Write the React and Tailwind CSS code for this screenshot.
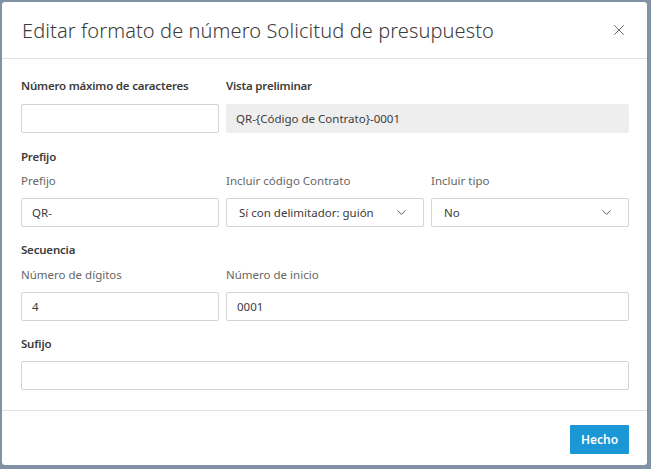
import { ChevronDown, X } from 'lucide-react';

const font = { fontFamily: '"Noto Sans", Roboto, sans-serif' };

function Field({ value = '', className = '' }) {
  return (
    <div className={`h-[29px] border border-[#d4d4d4] rounded-[2px] bg-white flex items-center px-[10px] text-[11.5px] text-[#3c3c3c] ${className}`}>
      {value}
    </div>
  );
}

function Select({ value }) {
  return (
    <div className="h-[29px] border border-[#d4d4d4] rounded-[2px] bg-white flex items-center justify-between pl-[12px] pr-[14px] text-[11.5px] text-[#3c3c3c]">
      <span>{value}</span>
      <ChevronDown className="w-[15px] h-[15px] text-[#555]" strokeWidth={1.5} />
    </div>
  );
}

function Label({ children, bold }) {
  return (
    <div className={`h-[16px] leading-[16px] text-[11.5px] ${bold ? 'font-semibold text-[#3c3c3c] tracking-[-0.2px]' : 'text-[#666]'}`}>
      {children}
    </div>
  );
}

export default function App() {
  return (
    <div className="w-[651px] h-[469px] bg-[#8292a6] pt-[2px] pl-[2px] pr-[4px] pb-[4px]" style={font}>
      <div className="bg-white rounded-[3px] h-full flex flex-col">
        {/* header */}
        <div className="h-[57px] shrink-0 border-b border-[#e3e3e3] flex items-center justify-between pl-[20px] pr-[19px]">
          <h1 className="text-[20px] font-light text-[#3c3c3c] tracking-[0.1px] mt-[2px]">
            Editar formato de número Solicitud de presupuesto
          </h1>
          <X className="w-[18px] h-[18px] text-[#666]" strokeWidth={1.3} />
        </div>

        {/* body */}
        <div className="flex-1 pl-[19px] pr-[18px] pt-[19px]">
          <div className="grid grid-cols-[198px_1fr] gap-x-[7px]">
            <Label bold>Número máximo de caracteres</Label>
            <Label bold>Vista preliminar</Label>
          </div>
          <div className="grid grid-cols-[198px_1fr] gap-x-[7px] mt-[10px]">
            <Field />
            <div className="h-[29px] rounded-[2px] bg-[#eeeeee] flex items-center px-[10px] text-[11.5px] text-[#3c3c3c]">
              QR-{'{'}Código de Contrato{'}'}-0001
            </div>
          </div>

          <div className="mt-[16px]">
            <Label bold>Prefijo</Label>
          </div>
          <div className="grid grid-cols-3 gap-x-[7px] mt-[8px]">
            <Label>Prefijo</Label>
            <Label>Incluir código Contrato</Label>
            <Label>Incluir tipo</Label>
          </div>
          <div className="grid grid-cols-3 gap-x-[7px] mt-[9px]">
            <Field value="QR-" />
            <Select value="Sí con delimitador: guión" />
            <Select value="No" />
          </div>

          <div className="mt-[15px]">
            <Label bold>Secuencia</Label>
          </div>
          <div className="grid grid-cols-[198px_1fr] gap-x-[7px] mt-[9px]">
            <Label>Número de dígitos</Label>
            <Label>Número de inicio</Label>
          </div>
          <div className="grid grid-cols-[198px_1fr] gap-x-[7px] mt-[9px]">
            <Field value="4" />
            <Field value="0001" />
          </div>

          <div className="mt-[15px]">
            <Label bold>Sufijo</Label>
          </div>
          <div className="mt-[9px]">
            <Field />
          </div>
        </div>

        {/* footer */}
        <div className="h-[55px] shrink-0 border-t border-[#e3e3e3] flex items-start justify-end pr-[18px] pt-[14px]">
          <button className="h-[29px] w-[59px] bg-[#1b97d5] text-white text-[12px] font-semibold rounded-[1px]">
            Hecho
          </button>
        </div>
      </div>
    </div>
  );
}
